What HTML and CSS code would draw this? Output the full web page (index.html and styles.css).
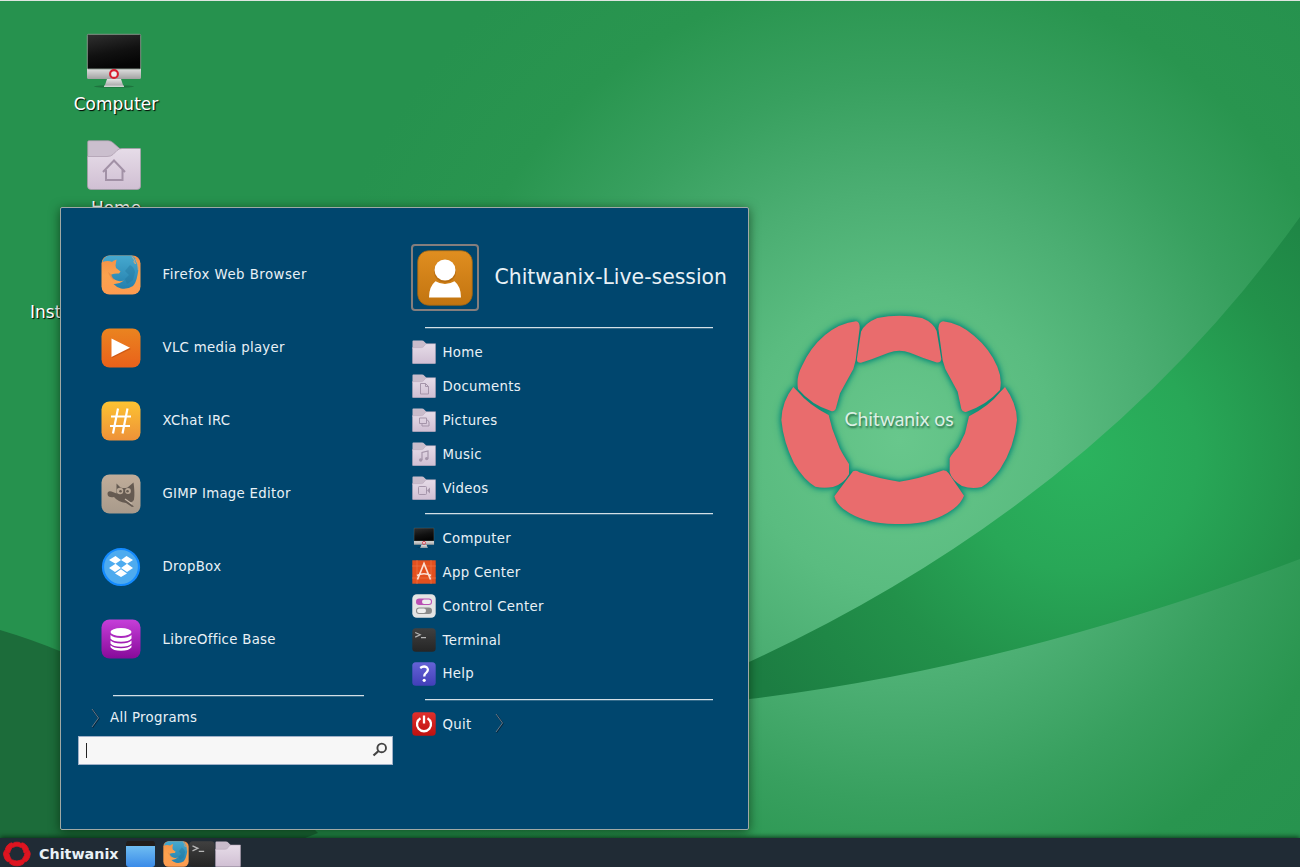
FILE: index.html
```html
<!DOCTYPE html>
<html lang="en">
<head>
<meta charset="utf-8">
<title>Chitwanix</title>
<link rel="stylesheet" href="styles.css">
</head>
<body>
<svg class="defs" width="0" height="0" aria-hidden="true">
  <defs>
    <linearGradient id="folderG" x1="0" y1="0" x2="0" y2="1"><stop offset="0" stop-color="#e6dce8"/><stop offset="1" stop-color="#d0bfd3"/></linearGradient>
    <linearGradient id="blackG" x1="0" y1="0" x2="0.3" y2="1"><stop offset="0" stop-color="#303030"/><stop offset="0.6" stop-color="#111"/><stop offset="1" stop-color="#050505"/></linearGradient>
    <linearGradient id="metalG" x1="0" y1="0" x2="0" y2="1"><stop offset="0" stop-color="#e4e4e4"/><stop offset="1" stop-color="#a2a2a2"/></linearGradient>
    <linearGradient id="ffG" x1="0" y1="0" x2="0" y2="1"><stop offset="0" stop-color="#f58f45"/><stop offset="0.5" stop-color="#fba24e"/><stop offset="1" stop-color="#fd9b50"/></linearGradient>
    <linearGradient id="globeG" x1="0" y1="0" x2="0" y2="1"><stop offset="0" stop-color="#46a9cf"/><stop offset="1" stop-color="#2580ad"/></linearGradient>
    <linearGradient id="vlcG" x1="0" y1="0" x2="0" y2="1"><stop offset="0" stop-color="#ea8420"/><stop offset="1" stop-color="#e9611a"/></linearGradient>
    <linearGradient id="ircG" x1="0" y1="0" x2="0" y2="1"><stop offset="0" stop-color="#fcc332"/><stop offset="1" stop-color="#ee9138"/></linearGradient>
    <linearGradient id="gimpG" x1="0" y1="0" x2="0" y2="1"><stop offset="0" stop-color="#c0ad9a"/><stop offset="1" stop-color="#a89a8b"/></linearGradient>
    <linearGradient id="baseG" x1="0" y1="0" x2="0" y2="1"><stop offset="0" stop-color="#c63fd9"/><stop offset="1" stop-color="#870a9a"/></linearGradient>
    <linearGradient id="userG" x1="0" y1="0" x2="0" y2="1"><stop offset="0" stop-color="#e08e20"/><stop offset="1" stop-color="#c27410"/></linearGradient>
    <linearGradient id="termG" x1="0" y1="0" x2="0" y2="1"><stop offset="0" stop-color="#404040"/><stop offset="1" stop-color="#252525"/></linearGradient>
    <linearGradient id="helpG" x1="0" y1="0" x2="0" y2="1"><stop offset="0" stop-color="#6563d6"/><stop offset="1" stop-color="#423fb8"/></linearGradient>
    <linearGradient id="quitG" x1="0" y1="0" x2="0" y2="1"><stop offset="0" stop-color="#e0302c"/><stop offset="1" stop-color="#bf100f"/></linearGradient>
    <linearGradient id="winG" x1="0" y1="0" x2="0" y2="1"><stop offset="0" stop-color="#6fbdf2"/><stop offset="1" stop-color="#3a8be8"/></linearGradient>

    <symbol id="i-folder" viewBox="0 0 24 24">
      <path d="M.5 9V1.300Q.5.500 1.300.500H10q1.400 0 2.400 1.200L15 4.200l-3 4.800z" fill="#c9bccb"/>
      <path d="M.5 7.600H9.500q1.600 0 2.600-1.500l.8-1.100q.7-1.300 2-1.300H23.500V23q0 .8-.8.8H1.300Q.5 23.800.5 23z" fill="url(#folderG)" stroke="#b5a3b7" stroke-width=".5"/>
    </symbol>
    <symbol id="i-computer" viewBox="0 0 56 56">
      <ellipse cx="28" cy="53.500" rx="20" ry="1.300" fill="#000" opacity=".2"/>
      <path d="M21 46h14l2.500 7.500h-19z" fill="url(#metalG)"/>
      <rect x="18" y="52.600" width="20" height="1.300" fill="#ddd"/>
      <path d="M1 35h54v9.500q0 1.500-1.500 1.500h-51Q1 46 1 44.500z" fill="url(#metalG)"/>
      <rect x="1.300" y="1.300" width="53.400" height="34.700" rx="1" fill="url(#blackG)" stroke="#8b9a8f" stroke-width=".9"/>
      <circle cx="28" cy="41" r="3.900" fill="#eee" stroke="#d81e30" stroke-width="2.100"/>
    </symbol>
    <symbol id="i-firefox" viewBox="0 0 40 40">
      <rect x=".5" y=".5" width="39" height="39" rx="8" fill="url(#ffG)"/>
      <path d="M1.500 7Q3 1 8.500.5H31Q34 2 35.500 6Q38.500 12 36.500 20Q35 28 32 31Q27 34.500 20 33.500Q15 32 12.500 29Q18 29.500 23 25.500Q18 27 14.500 25Q10.500 23 10.300 19.500Q14 18 18 18.500L19.500 16.500L15 13L14.500 10.500L15.500 4.500Q12 5.500 11 7Q7 5 1.500 7z" fill="url(#globeG)"/>
      <path d="M29 10q4 2 5 7l-2 8-6 4-2-5 4-4-4-4z" fill="#1f7098" opacity=".35"/>
      <path d="M31 1.500Q33.500 4 34.500 9l-2-2.500M34.500 4Q37.500 9 37.300 15" fill="none" stroke="#e8a66b" stroke-width=".8"/>
      <path d="M7 17q2 6 6.500 9l-3-6.500z" fill="#d77c45" opacity=".45"/>
    </symbol>
    <symbol id="i-term" viewBox="0 0 24 24">
      <rect x=".3" y=".3" width="23.400" height="23.400" rx="3.500" fill="url(#termG)"/>
      <path d="M3.200 4.500l5 2.300-5 2.300M9 9.600h5" fill="none" stroke="#b5b5b5" stroke-width="1.200"/>
    </symbol>
    <symbol id="i-chev" viewBox="0 0 10 20">
      <path d="M1.500 1.500L8 10.500 1.500 19.500" fill="none" stroke="#06273c" stroke-width="1.300"/>
      <path d="M1 1L7.500 10 1 19" fill="none" stroke="#66798a" stroke-width="1"/>
    </symbol>
  </defs>
</svg>

<div class="screen">
  <svg class="wallpaper" viewBox="0 0 1300 867" aria-hidden="true">
    <defs>
      <radialGradient id="sky" gradientUnits="userSpaceOnUse" cx="900" cy="440" r="600">
        <stop offset="0" stop-color="#68c78c"/><stop offset=".25" stop-color="#5abc80"/><stop offset=".42" stop-color="#4bae72"/><stop offset=".6" stop-color="#38a05f"/><stop offset=".78" stop-color="#29954f"/><stop offset="1" stop-color="#26924e"/>
      </radialGradient>
      <radialGradient id="band" gradientUnits="userSpaceOnUse" cx="1080" cy="455" r="390">
        <stop offset="0" stop-color="#2bb35e"/><stop offset=".3" stop-color="#28a757"/><stop offset=".6" stop-color="#22914a"/><stop offset="1" stop-color="#1c7d42"/>
      </radialGradient>
    </defs>
    <rect width="1300" height="867" fill="url(#sky)"/>
    <path d="M749 662Q1096 502 1300 217V559Q1015 667 749 699z" fill="url(#band)"/>
    <path d="M0 630Q170 680 318 833L300 840H0z" fill="#1c6c3a"/>
    <svg x="760" y="295" width="280" height="250" viewBox="0 0 840 750">
      <g id="ring">
        <path id="petals" d="M303 110Q315 84 352 69Q418 55 486 69Q520 83 530 108L544 192Q542 205 528 202L490 189 450 173Q418 162 386 173L335 193 303 203Q289 204 291 190z
          M288 79Q300 81 299 100L287 196 280 222 240 295 227 342Q222 351 213 348Q155 330 114 282Q108 245 126 213Q150 158 195 120Q240 84 288 79z
          M549 79Q536 81 535 100L548 196 556 222 593 290 604 342Q608 353 620 350Q680 330 720 285Q727 250 712 215Q690 162 642 122Q597 84 549 79z
          M100 276Q66 318 64 375Q70 440 102 505Q132 556 166 575Q190 581 219 576Q250 568 267 538V507Q249 480 239 460L217 402 206 360Q145 328 114 290z
          M735 276Q770 325 771 375Q764 455 720 523Q690 563 665 576Q635 583 606 573Q575 555 569 532V490Q574 478 595 456L615 415 627 364Q688 333 720 292z
          M279 529Q288 525 298 532Q360 552 418 560Q470 554 550 526Q560 526 566 535L612 602Q603 625 580 642Q515 690 418 687Q315 690 250 642Q228 625 223 604z"/>
      </g>
    </svg>
  </svg>

  <main class="desktop">
    <div class="shortcut">
      <svg class="pc"><use href="#i-computer"/></svg>
      <span class="label">Computer</span>
    </div>
    <div class="shortcut home">
      <svg class="folder" viewBox="0 0 54 50">
        <path d="M.7 20V2Q.7.700 2 .700H21q3 0 5 2l8 7-8 10z" fill="#cbbfce" stroke="#a99aab" stroke-width=".7"/>
        <path d="M.5 16.500H20q4 0 6-2l4-4Q32 8.500 35 8.500H53q.600 0 .600.600V46q0 3.500-3.500 3.500H4Q.5 49.500.5 46z" fill="url(#folderG)" stroke="#a99aab" stroke-width=".7"/>
        <path d="M16 32L27 20.500 38 32M19 30v10h16.500V30" fill="none" stroke="#a291a6" stroke-width="2"/>
      </svg>
      <span class="label">Home</span>
    </div>
    <div class="shortcut install"><span class="label">Inst</span></div>
  </main>

  <div class="brand">Chitwanix os</div>

  <section class="menu">
    <div class="programs">
      <ul class="apps">
        <li><svg><use href="#i-firefox"/></svg><span class="wide">Firefox Web Browser</span></li>
        <li><svg viewBox="0 0 40 40"><rect x=".5" y=".5" width="39" height="39" rx="8" fill="url(#vlcG)"/><path d="M11 11.500L30 21 11 30z" fill="#a93d0b" opacity=".4"/><path d="M10.500 10.500L29 19.700 10.500 29z" fill="#fff"/></svg><span>VLC media player</span></li>
        <li><svg viewBox="0 0 40 40"><rect x=".5" y=".5" width="39" height="39" rx="8" fill="url(#ircG)"/><path d="M17 7.500l-5 25M26.500 7.500l-5 25M10 15.500h20M9 25h20" stroke="#fff" stroke-width="2.200" fill="none"/></svg><span>XChat IRC</span></li>
        <li><svg viewBox="0 0 40 40"><rect x=".5" y=".5" width="39" height="39" rx="8" fill="url(#gimpG)"/><path d="M6.500 20q0-3.500 4-2.500l5 2q0-6 0-10l4 4q4 1 7 0l6-5q1.500 10 .5 17-1 3-5 3l5 4-2 .5-6-4q-8-1-12-6-6 1-6.500-3z" fill="#655a51"/><circle cx="19" cy="17" r="3.300" fill="#b8a796"/><circle cx="27" cy="17" r="2.900" fill="#b8a796"/><circle cx="19.500" cy="17.300" r="1.300" fill="#655a51"/><circle cx="26.500" cy="17.300" r="1.300" fill="#655a51"/><path d="M24 25l7 5" stroke="#c5b7a8" stroke-width="1.300"/></svg><span>GIMP Image Editor</span></li>
        <li><svg viewBox="0 0 40 40"><circle cx="20" cy="20" r="18" fill="#4eabef" stroke="#148bff" stroke-width="2.200"/><path d="M14.500 9l5.500 4-5.500 3.800L8 13zM25.500 9L20 13l6 3.800 6-3.800zM8 21l6.500-4.200L20 21l-6 4zM32 21l-6-4.200L20 21l6 4zM14 26.500l6-4.200 6 4.200-6 3.500z" fill="#fff"/></svg><span>DropBox</span></li>
        <li><svg viewBox="0 0 40 40"><rect x=".5" y=".5" width="39" height="39" rx="8" fill="url(#baseG)"/><ellipse cx="20" cy="13" rx="10.500" ry="4" fill="#fff"/><path d="M9.500 16q3 3 10.500 3t10.500-3v3.500q-2.500 3.200-10.500 3.200T9.500 19.500zM9.500 21.500q3 3 10.500 3t10.500-3v3q-2.500 3.200-10.500 3.200T9.500 24.500zM9.500 26.300q3 3 10.500 3t10.500-3v2q-2.500 3.500-10.500 3.500T9.500 28.300z" fill="#fff"/></svg><span>LibreOffice Base</span></li>
      </ul>
      <hr class="rule">
      <div class="all"><svg class="chev"><use href="#i-chev"/></svg><span>All Programs</span></div>
      <div class="search">
        <span class="caret"></span>
        <svg class="lens" viewBox="0 0 16 16"><circle cx="9.700" cy="5.900" r="4.300" fill="none" stroke="#444" stroke-width="1.900"/><path d="M6.500 9L1.500 13.500" stroke="#444" stroke-width="2.300"/></svg>
      </div>
    </div>

    <div class="places">
      <header class="user">
        <div class="avatar"><svg viewBox="0 0 56 56"><rect x=".7" y=".7" width="54.600" height="54.600" rx="11" fill="url(#userG)" stroke="#9c6314" stroke-width=".8"/><circle cx="28" cy="21.500" r="11" fill="#a35c08" opacity=".5"/><circle cx="28" cy="20" r="10.500" fill="#fff"/><path d="M12 47.500q0-11 6.500-16.200 9.500 5.500 19 0Q44 36.500 44 47.500z" fill="#fff"/></svg></div>
        <h1>Chitwanix-Live-session</h1>
      </header>
      <hr class="rule">
      <ul class="links">
        <li><svg><use href="#i-folder"/></svg><span>Home</span></li>
        <li><svg viewBox="0 0 24 24"><use href="#i-folder"/><path d="M8.500 9.500h5l3 3v7.500h-8zM13.500 9.500v3h3" fill="none" stroke="#a595aa"/></svg><span>Documents</span></li>
        <li><svg viewBox="0 0 24 24"><use href="#i-folder"/><path d="M7.500 10h7v5.500h-7zM14.500 12h1l1.500 2v4h-7v-2.500" fill="none" stroke="#a595aa"/></svg><span>Pictures</span></li>
        <li><svg viewBox="0 0 24 24"><use href="#i-folder"/><path d="M10 18v-7.500l6-1.500v7.500" fill="none" stroke="#a595aa" stroke-width="1.200"/><circle cx="8.700" cy="18" r="1.700" fill="#a595aa"/><circle cx="14.700" cy="16.600" r="1.700" fill="#a595aa"/></svg><span>Music</span></li>
        <li><svg viewBox="0 0 24 24"><use href="#i-folder"/><rect x="6.500" y="10.500" width="8" height="8" rx="1" fill="none" stroke="#a595aa"/><path d="M15 14.500l3-3v6z" fill="#a595aa"/></svg><span>Videos</span></li>
      </ul>
      <hr class="rule">
      <ul class="links">
        <li><svg viewBox="-4 -4 64 64"><use href="#i-computer" width="56" height="56"/></svg><span>Computer</span></li>
        <li><svg viewBox="0 0 24 24"><rect x=".3" y=".3" width="23.400" height="23.400" fill="#e3501e"/><path d="M0 6h24M0 18h24M5 0v24M19 0v24" stroke="#f07a4a" stroke-width=".6"/><path d="M5.500 19.500L12 3.500l6.500 16M5 15.500q7-3.500 14 0" fill="none" stroke="#fbe0d4" stroke-width="1.700"/></svg><span>App Center</span></li>
        <li><svg viewBox="0 0 24 24"><rect x=".3" y=".3" width="23.400" height="23.400" rx="4.500" fill="#e4e4e4"/><rect x="4" y="4.500" width="16" height="6.400" rx="3.200" fill="#b94fb4"/><rect x="10" y="5.500" width="9" height="4.400" rx="2.200" fill="#eee"/><rect x="4" y="13.500" width="16" height="6.400" rx="3.200" fill="#8a8a8a"/><rect x="5" y="14.500" width="9" height="4.400" rx="2.200" fill="#eee"/></svg><span>Control Center</span></li>
        <li><svg><use href="#i-term"/></svg><span>Terminal</span></li>
        <li><svg viewBox="0 0 24 24"><rect x=".3" y=".3" width="23.400" height="23.400" rx="3.500" fill="url(#helpG)"/><path d="M8.200 6q3.500-2.600 6.500-.7 2.500 2.500-.2 5-2.300 1.800-2.300 4.200" fill="none" stroke="#fff" stroke-width="2.300"/><circle cx="12.200" cy="18.300" r="1.600" fill="#fff"/></svg><span>Help</span></li>
      </ul>
      <hr class="rule">
      <ul class="links">
        <li><svg viewBox="0 0 24 24"><rect x=".3" y=".3" width="23.400" height="23.400" rx="3.500" fill="url(#quitG)"/><path d="M8.500 6.200a7 7 0 1 0 7 0M12 3.500v8" fill="none" stroke="#fff" stroke-width="2.300"/></svg><span>Quit</span><svg class="chev"><use href="#i-chev"/></svg></li>
      </ul>
    </div>
  </section>

  <footer class="taskbar">
    <svg class="logo" viewBox="50 40 740 670"><use href="#petals"/></svg>
    <span class="start">Chitwanix</span>
    <svg class="win" viewBox="0 0 29 26"><path d="M0 5V2l1.500-2h26L29 2v3z" fill="#211d1b"/><path d="M0 5h29v18q0 3-3 3H3q-3 0-3-3z" fill="url(#winG)"/></svg>
    <svg class="tray"><use href="#i-firefox"/></svg>
    <svg class="tray"><use href="#i-term"/></svg>
    <svg class="tray"><use href="#i-folder"/></svg>
  </footer>
</div>
</body>
</html>
```
FILE: styles.css
```css
* { box-sizing: border-box; }
body { margin: 0; font-family: "DejaVu Sans", sans-serif; color: #e9f1f6; }
ul { list-style: none; margin: 0; padding: 0; }
svg { display: block; flex: none; }
.defs { position: absolute; }

.screen {
  position: relative;
  width: 1300px;
  height: 867px;
  overflow: hidden;
  display: flex;
  flex-direction: column;
  border-top: 1px solid #dfe5e1;
}
.wallpaper { position: absolute; left: 0; top: -1px; width: 1300px; height: 867px; }
#ring { fill: #e96c6d; filter: drop-shadow(0 0 8px #0b8b78) drop-shadow(0 0 9px #0b8b78); }

.desktop { position: relative; flex: 1; padding: 32px 0 0 60px; }
.shortcut { width: 110px; display: flex; flex-direction: column; align-items: center; }
.pc { width: 56px; height: 56px; margin-right: 2px; }
.folder { width: 54px; height: 50px; margin-right: 2px; }
.home { margin-top: 26px; }
.label { font-size: 17px; line-height: 20px; margin-top: 5px; margin-left: 2px; color: #fff; text-shadow: 1px 1px 1px #000; }
.home .label { margin-top: 8px; }
.install { width: auto; align-items: flex-start; margin: 79px 0 0 -32px; }

.brand {
  position: absolute;
  left: 779px;
  top: 405px;
  width: 240px;
  text-align: center;
  font: 400 19.500px/26px Lato, sans-serif;
  letter-spacing: -.1px;
  color: #dcefe4;
  text-shadow: 1px 2px 2px rgba(20, 80, 50, .7);
}

.menu {
  position: absolute;
  left: 60px;
  top: 206px;
  width: 689px;
  height: 623px;
  display: flex;
  background: #00466e;
  border: 1px solid #9fa9a5;
  border-radius: 2px;
  box-shadow: 0 2px 11px rgba(0, 25, 5, .6);
  font-size: 13.300px;
  letter-spacing: .3px;
}
.wide { letter-spacing: .48px; }
.programs { width: 332px; padding: 30.500px 0 0 16.500px; }
.apps li { height: 72.900px; display: flex; align-items: center; padding: 0 0 0 23.500px; }
.apps svg { width: 40px; height: 40px; margin-right: 21.500px; }
.rule { width: 288px; height: 1px; margin: 0; border: 0; background: #d3dfe6; box-shadow: 0 1px rgba(211, 223, 230, .25); }
.programs .rule { width: 251px; margin: 19px 0 0 35.500px; }
.all { display: flex; align-items: center; height: 20px; margin: 12px 0 0 13.500px; }
.chev { width: 10px; height: 20px; }
.all .chev { margin-right: 9px; }
.search {
  width: 315px;
  height: 29px;
  margin-top: 8px;
  padding: 0 4px 0 7px;
  display: flex;
  align-items: center;
  justify-content: space-between;
  background: #f7f7f7;
  border: 1px solid #9fb0c8;
}
.caret { width: 1px; height: 15px; background: #222; }
.lens { width: 16px; height: 16px; }

.places { padding: 36px 0 0 18px; }
.user { display: flex; align-items: center; letter-spacing: 0; }
.avatar { width: 68px; height: 67px; padding: 4px; border: 2px solid #857e7d; border-radius: 4px; }
.avatar svg { width: 56px; height: 56px; }
.user h1 { margin: 0 0 2px 15.500px; font-size: 20.400px; font-weight: 400; white-space: nowrap; }
.places .rule { margin-left: 14px; }
.user + .rule { margin-top: 16px; }
.links { padding: 7.500px 0 8px 1px; }
.links li { height: 33.900px; display: flex; align-items: center; }
.links svg { width: 24px; height: 24px; margin-right: 6.500px; }
.links .chev { width: 10px; height: 20px; margin: 0 0 2px 23.500px; }

.taskbar {
  position: relative;
  height: 29px;
  padding-left: 3px;
  display: flex;
  align-items: center;
  background: #202b35;
  box-shadow: 0 -1px 5px rgba(0, 30, 10, .8);
}
.logo { width: 28px; height: 26px; margin-top: 2px; fill: #df1420; stroke: #df1420; stroke-width: 22; }
.start { width: 87px; padding: 2px 0 0 8px; font-weight: 700; font-size: 14.300px; }
.win { width: 29px; height: 26px; margin: 3px 8px 0 8px; }
.tray { width: 26px; height: 26px; margin-top: 3px; }
```
